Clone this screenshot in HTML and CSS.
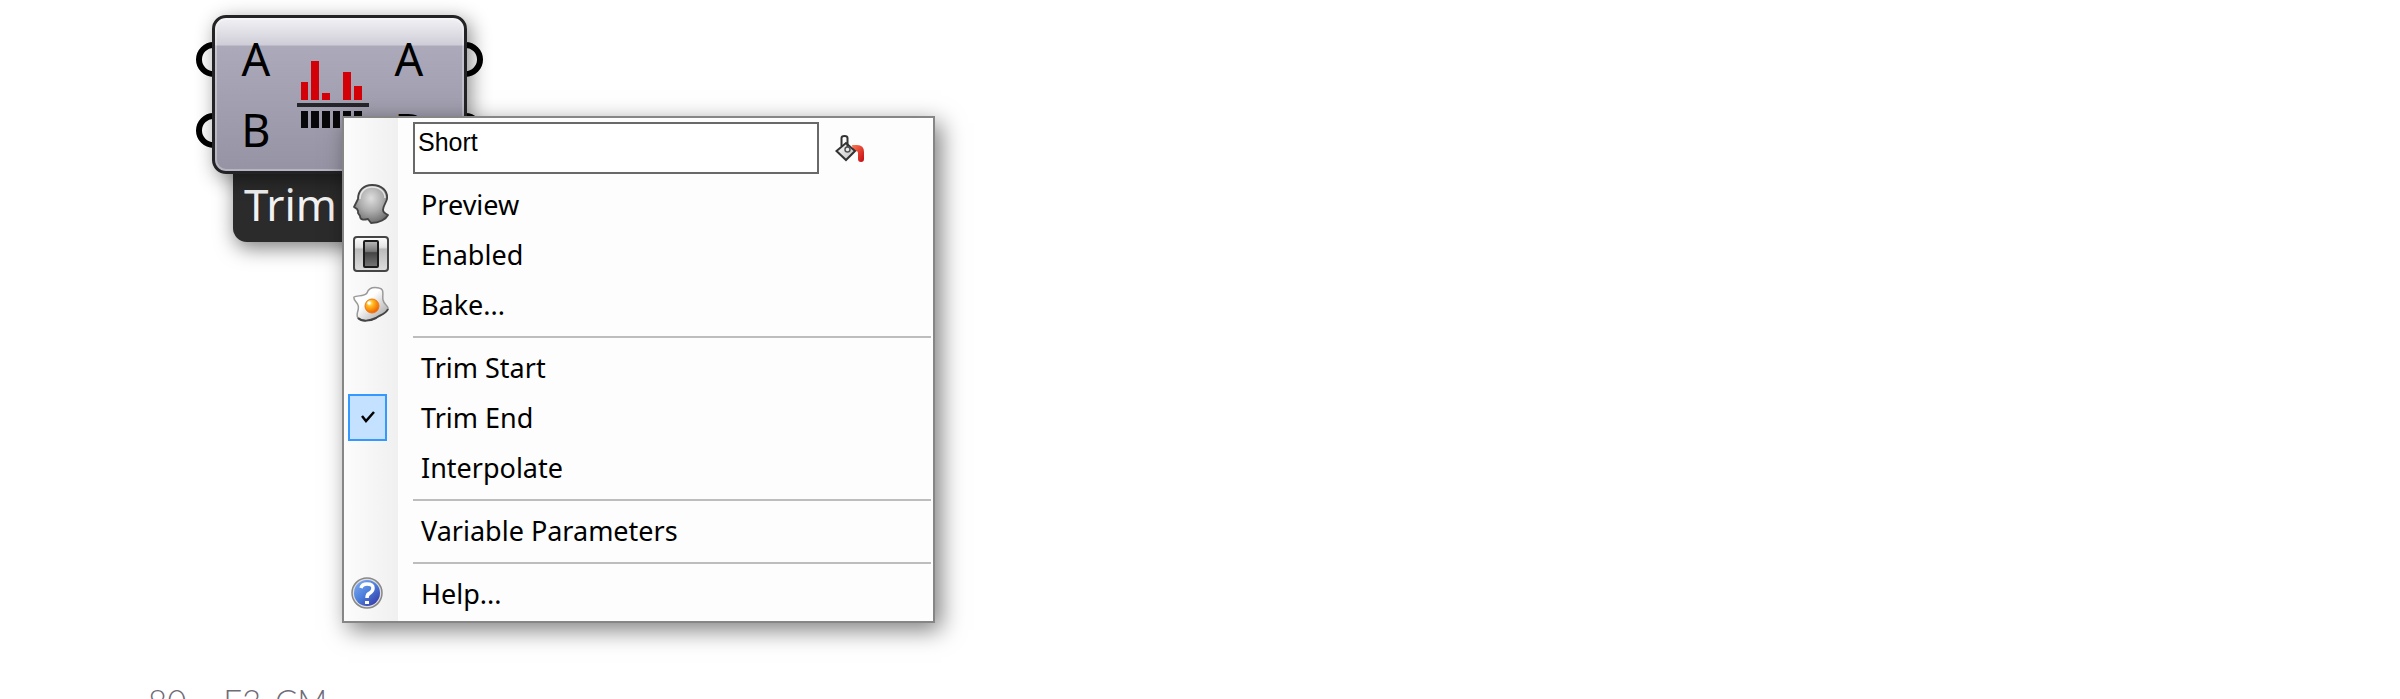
FILE: index.html
```html
<!DOCTYPE html>
<html lang="en">
<head>
<meta charset="utf-8">
<title>Trim component</title>
<link rel="stylesheet" href="styles.css">
</head>
<body>
<main class="canvas">
  <section class="component" aria-label="Trim component">
    <div class="ports ports-left"><i class="port"></i><i class="port"></i></div>
    <div class="ports ports-right"><i class="port"></i><i class="port"></i></div>
    <div class="tag">Trim</div>
    <div class="body">
      <div class="names"><span>A</span><span>B</span></div>
      <svg class="glyph" viewBox="0 0 72 72" aria-hidden="true">
        <g fill="#d40008"><path d="M4 22h7v18H4zM14 1h8v39h-8zM25 33h8v7h-8zM46 12h8v28h-8zM57 26h8v14h-8z"/></g>
        <path fill="#26262a" d="M0 43h72v4H0z"/>
        <path fill="#08080a" d="M4 51h7v17H4zM14 51h8v17h-8zM25 51h8v17h-8zM36 51h7v17h-7zM46 51h8v17h-8zM57 51h8v17h-8z"/>
      </svg>
      <div class="names"><span>A</span><span>B</span></div>
    </div>
  </section>

  <div class="menu" role="menu">
    <div class="name-row">
      <input class="name-input" type="text" value="Short" aria-label="Name">
      <button class="paint" type="button" aria-label="Colour">
        <svg viewBox="0 0 30 30" width="30" height="30" aria-hidden="true">
          <defs><linearGradient id="red" x1="0" y1="0" x2="1" y2="1"><stop offset="0" stop-color="#ff7a50"/><stop offset="1" stop-color="#c40812"/></linearGradient>
          <linearGradient id="can" x1="0" y1="0" x2="1" y2="1"><stop offset="0" stop-color="#fff"/><stop offset="1" stop-color="#bbb"/></linearGradient></defs>
          <path d="M17 11h5q7 0 7 7v7q0 3-3 3t-3-3v-6q0-2-2-2h-3z" fill="url(#red)"/>
          <path d="M1.500 17L11 9l9 8-9 9z" fill="url(#can)" stroke="#333" stroke-width="2"/>
          <path d="M6.500 12V4q0-2 3-2t3 2v11" fill="none" stroke="#333" stroke-width="2"/>
          <circle cx="12.500" cy="15.500" r="2.500" fill="#eee" stroke="#555" stroke-width="1.500"/>
        </svg>
      </button>
    </div>
    <button class="item" type="button" role="menuitem">
      <span class="mark"><svg viewBox="0 0 36 40" width="36" height="40" aria-hidden="true">
        <defs><radialGradient id="head" cx=".5" cy=".35" r=".7"><stop offset="0" stop-color="#dedede"/><stop offset=".5" stop-color="#acacac"/><stop offset="1" stop-color="#666"/></radialGradient></defs>
        <path d="M5 15C5 6 11 1 19 1c10 0 16 6 15 14-1 4-4 7-4 11 0 3 2 3 5 5-2 4-8 8-17 8l-3-4c-5 1-8 1-8-3l-2-3 0-2-1-2-3-2z" fill="url(#head)" stroke="#444" stroke-width="1.800" stroke-linejoin="round"/>
        <path d="M7 15C7 8 12 3 19 3c8 0 13 5 13 11" fill="none" stroke="#fff" stroke-width="1.500" opacity=".7"/>
      </svg></span><span>Preview</span>
    </button>
    <button class="item" type="button" role="menuitem">
      <span class="mark"><svg viewBox="0 0 36 36" width="36" height="36" aria-hidden="true">
        <defs><linearGradient id="plate" x2="0" y2="1"><stop offset="0" stop-color="#fff"/><stop offset=".3" stop-color="#e4e4e4"/><stop offset=".36" stop-color="#bbb"/><stop offset="1" stop-color="#ddd"/></linearGradient>
        <linearGradient id="rocker" x2="0" y2="1"><stop offset="0" stop-color="#bbb"/><stop offset=".4" stop-color="#777"/><stop offset=".45" stop-color="#444"/><stop offset="1" stop-color="#777"/></linearGradient></defs>
        <rect x="1" y="1" width="34" height="34" rx="3" fill="url(#plate)" stroke="#444" stroke-width="2"/>
        <rect x="11" y="5" width="14" height="26" rx="1" fill="url(#rocker)" stroke="#1c1c1c" stroke-width="2"/>
      </svg></span><span>Enabled</span>
    </button>
    <button class="item" type="button" role="menuitem">
      <span class="mark"><svg viewBox="0 0 36 36" width="36" height="36" aria-hidden="true">
        <defs><linearGradient id="white" x2="1" y2="1"><stop offset=".4" stop-color="#fff"/><stop offset="1" stop-color="#999"/></linearGradient>
        <radialGradient id="yolk" cx=".35" cy=".3" r=".75"><stop offset="0" stop-color="#fff2a0"/><stop offset=".35" stop-color="#ffb51c"/><stop offset="1" stop-color="#ee5a00"/></radialGradient></defs>
        <path d="M1 11c3-2 10 0 13-4 2-6 7-6 12-5 6 1 3 7 4 12 1 5 6 6 5 9-2 5-8 6-12 9-6 3-14 4-18 0-3-4 2-8 0-13C4 16 0 14 1 11z" fill="url(#white)" stroke="#999" stroke-width="1.500"/>
        <path d="M35 23c-2 5-8 6-12 9-6 3-14 4-18 0" fill="none" stroke="#444" stroke-width="2"/>
        <circle cx="19" cy="20" r="7" fill="url(#yolk)" stroke="#f07810"/>
        <circle cx="16" cy="17" r="1.800" fill="#fff"/>
      </svg></span><span>Bake...</span>
    </button>
    <hr class="rule">
    <button class="item" type="button" role="menuitem"><span class="mark"></span><span>Trim Start</span></button>
    <button class="item" type="button" role="menuitemcheckbox" aria-checked="true">
      <span class="mark mark-check"><span class="check"><svg viewBox="0 0 14 12" width="14" height="12" aria-hidden="true"><path d="M1 5l4 5 8-9" fill="none" stroke="#000" stroke-width="2.500"/></svg></span></span><span>Trim End</span>
    </button>
    <button class="item" type="button" role="menuitem"><span class="mark"></span><span>Interpolate</span></button>
    <hr class="rule">
    <button class="item" type="button" role="menuitem"><span class="mark"></span><span>Variable Parameters</span></button>
    <hr class="rule">
    <button class="item" type="button" role="menuitem">
      <span class="mark mark-help"><svg viewBox="0 0 32 32" width="32" height="32" aria-hidden="true">
        <defs><linearGradient id="ball" x1=".1" y1=".1" x2=".8" y2=".9"><stop offset="0" stop-color="#7aa4ee"/><stop offset=".5" stop-color="#4c80dc"/><stop offset="1" stop-color="#3a44b0"/></linearGradient></defs>
        <circle cx="16" cy="16" r="15" fill="#ddd" stroke="#888" stroke-width="1.500"/>
        <circle cx="16" cy="16" r="13" fill="url(#ball)"/>
        <path d="M10 11q1-4 6-4 6 0 6 4 0 3-3 5-3 1-3 5" fill="none" stroke="#fff" stroke-width="3.500"/>
        <path d="M14 24h4v3h-4z" fill="#fff"/>
      </svg></span><span>Help...</span>
    </button>
  </div>
</main>
<footer class="folio"><span>80</span><span class="code">F3</span><span>CM</span></footer>
</body>
</html>
```
FILE: styles.css
```css
* { box-sizing: border-box; }
html, body { height: 100%; }
body {
  margin: 0;
  overflow: hidden;
  background: #fff;
  color: #000;
  font-family: "Noto Sans", "Open Sans", sans-serif;
}
.canvas { position: relative; height: 682px; }

.component {
  position: absolute;
  left: 212px;
  top: 15px;
  width: 255px;
}
.body {
  position: relative;
  display: flex;
  justify-content: space-between;
  align-items: flex-start;
  height: 159px;
  padding: 5px 39px 0 25px;
  border: 3px solid #232325;
  border-radius: 14px;
  background: linear-gradient(#f2f2f5 0, #cfced8 27px, #acaaba 28px, #9694a4 100%);
  box-shadow: inset 0 0 0 2px rgba(255, 255, 255, .3), 4px 5px 20px rgba(0, 0, 0, .45);
}
.names { display: flex; flex-direction: column; width: 32px; text-align: center; }
.names span { font-size: 45px; line-height: 71px; }
.glyph { width: 72px; height: 72px; margin: 37px 0 0; }
.tag {
  position: absolute;
  left: 21px;
  top: 145px;
  width: 180px;
  height: 82px;
  padding: 12px 11px 0;
  border-radius: 0 0 14px 14px;
  background: #2b2b2c;
  box-shadow: 2px 6px 20px rgba(0, 0, 0, .5);
  color: #f2f2f2;
  font-size: 44px;
  line-height: 64px;
}
.ports { position: absolute; top: 27px; display: grid; gap: 36px; }
.ports-left { left: -16px; }
.ports-right { right: -16px; }
.port { width: 35px; height: 35px; border: 6px solid #000; border-radius: 50%; background: #fff; }

.menu {
  position: absolute;
  left: 342px;
  top: 116px;
  width: 593px;
  padding-bottom: 2px;
  border: 2px solid #868686;
  background: linear-gradient(90deg, #fcfcfc 0, #f0f0f0 54px, #fdfdfd 54px);
  box-shadow: 6px 7px 22px rgba(0, 0, 0, .5);
}
.name-row { display: flex; align-items: flex-start; height: 62px; padding: 4px 0 0 69px; }
.name-input {
  width: 406px;
  height: 52px;
  padding: 0 3px 11px;
  border: 2px solid #696969;
  background: #fff;
  color: #000;
  font: 25px "Liberation Sans", Arial, sans-serif;
}
.paint { margin: 12px 0 0 16px; padding: 0; border: 0; background: none; line-height: 0; }
.item {
  display: flex;
  align-items: center;
  width: 100%;
  height: 50px;
  padding: 0 0 2px;
  border: 0;
  background: none;
  color: #000;
  font: 27px "Noto Sans", "Open Sans", sans-serif;
  text-align: left;
}
.mark { display: flex; flex: none; justify-content: center; width: 77px; padding-right: 23px; }
.mark-help { padding-right: 31px; }
.mark-check { justify-content: flex-start; padding: 0 0 0 4px; }
.check {
  display: grid;
  place-items: center;
  width: 39px;
  height: 47px;
  border: 2px solid #3399ff;
  background: #c4e1ff;
}
.rule { height: 2px; margin: 6px 2px 5px 69px; border: 0; background: #bdbdbd; }

.folio {
  display: flex;
  padding-left: 148px;
  color: #6f6c7a;
  font: 300 33px/38px Lato, sans-serif;
}
.code { margin: 0 14px 0 37px; }
```
